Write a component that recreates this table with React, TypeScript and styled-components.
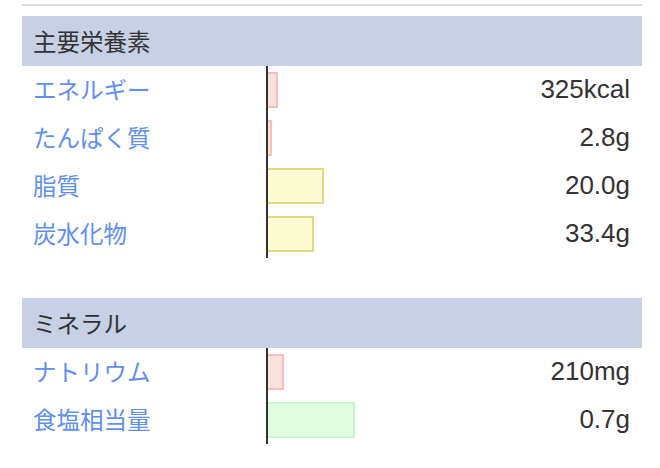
import React from "react";
import styled, { createGlobalStyle } from "styled-components";

const GlobalStyle = createGlobalStyle`
  body {
    margin: 0;
    background: #fff;
    font-family: "Noto Sans CJK JP", "Noto Sans", sans-serif;
    color: #333;
  }
`;

const Page = styled.div`
  padding: 4px 18px 0 22px;
`;

const TopRule = styled.hr`
  margin: 0 0 10px;
  border: none;
  border-top: 2px solid #dddddd;
`;

const SectionList = styled.div`
  display: flex;
  flex-direction: column;
  gap: 40px;
`;

const Section = styled.section``;

const SectionTitle = styled.h2`
  margin: 0;
  height: 50px;
  display: flex;
  align-items: center;
  padding-left: 11px;
  background: #c7d0e4;
  color: #333;
  font-size: 23.5px;
  font-weight: 400;
`;

const Row = styled.div`
  display: grid;
  grid-template-columns: 244px 1fr auto;
  height: 48px;
`;

const Label = styled.a`
  display: flex;
  align-items: center;
  padding-left: 11px;
  padding-bottom: 2px;
  color: #5f8fef;
  font-size: 23.5px;
  text-decoration: none;
`;

const Chart = styled.div`
  border-left: 2px solid #333;
  padding: 6px 0;
`;

type Tone = "red" | "yellow" | "green";

const tones: Record<Tone, { fill: string; line: string }> = {
  red: { fill: "#fbe1dd", line: "#f6c0b4" },
  yellow: { fill: "#fdfbd3", line: "#e5d97d" },
  green: { fill: "#e0fde0", line: "#c3f7c3" },
};

const Bar = styled.div<{ $tone: Tone }>`
  box-sizing: border-box;
  height: 36px;
  background: ${(p) => tones[p.$tone].fill};
  border: 2px solid ${(p) => tones[p.$tone].line};
  border-left: none;
`;

const Value = styled.div`
  display: flex;
  align-items: center;
  padding-right: 12px;
  padding-bottom: 2px;
  font-family: "Liberation Sans", Arial, sans-serif;
  font-size: 26px;
  color: #333;
`;

interface Item {
  name: string;
  value: string;
  width: number;
  tone: Tone;
}

const sections: { title: string; items: Item[] }[] = [
  {
    title: "主要栄養素",
    items: [
      { name: "エネルギー", value: "325kcal", width: 10, tone: "red" },
      { name: "たんぱく質", value: "2.8g", width: 4, tone: "red" },
      { name: "脂質", value: "20.0g", width: 56, tone: "yellow" },
      { name: "炭水化物", value: "33.4g", width: 46, tone: "yellow" },
    ],
  },
  {
    title: "ミネラル",
    items: [
      { name: "ナトリウム", value: "210mg", width: 16, tone: "red" },
      { name: "食塩相当量", value: "0.7g", width: 87, tone: "green" },
    ],
  },
];

const App = () => {
  return (
    <Page>
      <GlobalStyle />
      <TopRule />
      <SectionList>
        {sections.map((s) => (
          <Section key={s.title}>
            <SectionTitle>{s.title}</SectionTitle>
            {s.items.map((it) => (
              <Row key={it.name}>
                <Label href="#">{it.name}</Label>
                <Chart>
                  <Bar $tone={it.tone} style={{ width: it.width }} />
                </Chart>
                <Value>{it.value}</Value>
              </Row>
            ))}
          </Section>
        ))}
      </SectionList>
    </Page>
  );
};

export default App;
